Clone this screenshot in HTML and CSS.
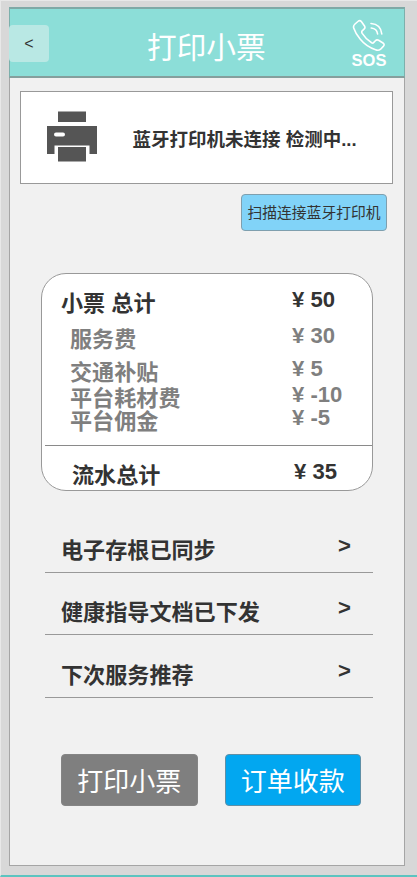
FILE: index.html
```html
<!DOCTYPE html>
<html lang="zh-CN">
<head>
<meta charset="utf-8">
<title>打印小票</title>
<link rel="stylesheet" href="styles.css">
</head>
<body>
<main class="screen">
  <header class="header">
    <button class="back">&lt;</button>
    <h1 class="title">打印小票</h1>
    <div class="sos">
      <svg class="phone" viewBox="0 0 34 34" fill="none" stroke="#fff" stroke-width="1.6" stroke-linecap="round" stroke-linejoin="round">
        <path d="M3 5 L6.5 2 Q8.2 1 9.500 2.700 L12.500 7 Q13.600 8.800 12 10.200 L10.200 11.800 Q9.300 12.800 10.200 14.400 Q14 20.400 19.600 23.800 Q20.900 24.500 21.800 23.400 L23.400 21.700 Q24.800 20.200 26.600 21.300 L31 24 Q32.900 25.300 31.500 27.100 L28.600 30.200 Q26.600 32 23.600 30.800 Q14.200 27.600 8.300 20.300 Q3.600 14.800 1.700 9 Q1 6.800 3 5Z"/>
        <path d="M19 4.500 Q28.800 5.200 29.800 15M19.200 9 Q25 9.500 25.600 15"/>
      </svg>
      <span class="sos-label">SOS</span>
    </div>
  </header>

  <section class="printer">
    <svg class="printer-icon" viewBox="0 0 50 51" fill="#555">
      <path d="M11 0.500h28V11H11zM0 15h50v28h-7.500v-8.500h-35V43H0zM11 36h28v14.500H11z"/>
      <rect x="7" y="21.500" width="11" height="4" rx="2" fill="#fff"/>
    </svg>
    <p class="printer-text">蓝牙打印机未连接 检测中...</p>
  </section>
  <button class="scan">扫描连接蓝牙打印机</button>

  <section class="receipt">
    <div class="row row-head"><span class="name">小票 总计</span><span class="price">¥ 50</span></div>
    <div class="row row-service"><span class="name">服务费</span><span class="price">¥ 30</span></div>
    <div class="row row-travel"><span class="name">交通补贴</span><span class="price">¥ 5</span></div>
    <div class="row row-supply"><span class="name">平台耗材费</span><span class="price">¥ -10</span></div>
    <div class="row row-fee"><span class="name">平台佣金</span><span class="price">¥ -5</span></div>
    <div class="row row-total"><span class="name">流水总计</span><span class="price">¥ 35</span></div>
  </section>

  <nav class="links">
    <a class="link"><span>电子存根已同步</span><span class="arrow">&gt;</span></a>
    <a class="link"><span>健康指导文档已下发</span><span class="arrow">&gt;</span></a>
    <a class="link"><span>下次服务推荐</span><span class="arrow">&gt;</span></a>
  </nav>

  <footer class="actions">
    <button class="action print">打印小票</button>
    <button class="action pay">订单收款</button>
  </footer>
</main>
</body>
</html>
```
FILE: styles.css
```css
* { box-sizing: border-box; }
body {
  margin: 0;
  height: 877px;
  padding: 6px 0 0 8px;
  overflow: hidden;
  background: #d8d8d8;
  border-left: 1px solid #e8e8e8;
  border-top: 1px solid #e8e8e8;
  border-bottom: 2px solid #5cc4c0;
  color: #333;
  font-family: "Liberation Sans", "Noto Sans CJK SC", sans-serif;
}
button {
  padding: 0;
  font-family: inherit;
  white-space: nowrap;
}
.screen {
  width: 396px;
  height: 859px;
  background: #f1f1f1;
  border: 1px solid #a5a5a5;
  border-top: 0;
}
.header {
  display: flex;
  height: 71px;
  margin: 0 -1px;
  background: #8cded8;
  border: 1px solid #7cb0ac;
  border-top: 2px solid #7fa9a6;
  border-bottom: 2px solid #859f9d;
}
.back {
  width: 40px;
  height: 37px;
  margin: 16px 0 0 -1px;
  border: 0;
  border-radius: 4px;
  background: #b9e8e4;
  color: #333;
  font-size: 16px;
}
.title {
  width: 120px;
  margin: 17px 0 0 98px;
  color: #fff;
  font-size: 29.7px;
  line-height: 44px;
  font-weight: 400;
  white-space: nowrap;
}
.sos {
  display: flex;
  flex-direction: column;
  align-items: center;
  width: 40px;
  margin: 10px 0 0 82px;
}
.phone { width: 34px; height: 34px; }
.sos-label {
  color: #fff;
  font-size: 16.5px;
  font-weight: 700;
  line-height: 14px;
}
.printer {
  display: flex;
  align-items: center;
  width: 373px;
  height: 93px;
  margin: 13px 0 0 10px;
  padding-left: 26px;
  background: #fff;
  border: 1px solid #999;
}
.printer-icon { width: 50px; height: 51px; margin-bottom: 3px; }
.printer-text {
  margin: 0 0 0 35.5px;
  font-size: 18.5px;
  font-weight: 700;
  white-space: nowrap;
}
.scan {
  display: block;
  width: 146px;
  height: 37px;
  margin: 10px 0 0 231px;
  border: 1px solid #7f9fae;
  border-radius: 4px;
  background: #81d3f8;
  color: #333;
  font-size: 14.8px;
  line-height: 34px;
}
.receipt {
  width: 332px;
  height: 218px;
  margin: 42px 0 0 31px;
  padding-top: 14px;
  overflow: hidden;
  background: #fff;
  border: 1px solid #999;
  border-radius: 25px;
  font-size: 22.1px;
  font-weight: 700;
}
.row {
  display: grid;
  grid-template-columns: 222px 1fr;
  align-items: center;
  padding-left: 28px;
  line-height: 19px;
  color: #7f7f7f;
  white-space: nowrap;
}
.price { margin-bottom: 8px; line-height: 11px; }
.row-head { height: 31px; padding-left: 19px; grid-template-columns: 231px 1fr; color: #333; }
.row-service { height: 41px; }
.row-travel { height: 25px; }
.row-supply { height: 27px; }
.row-fee { height: 19px; }
.row-total {
  height: 46px;
  margin: 14px 0 0 3px;
  padding: 13px 0 0 27px;
  border-top: 1px solid #8a8a8a;
  color: #333;
}
.links {
  width: 328px;
  margin: 19px 0 0 35px;
}
.link {
  display: flex;
  justify-content: space-between;
  align-items: flex-end;
  height: 62.5px;
  padding: 0 22px 8px 16px;
  border-bottom: 1px solid #999;
  font-size: 22.1px;
  font-weight: 700;
}
.arrow { margin-bottom: 5px; }
.actions {
  display: flex;
  gap: 27px;
  margin: 56px 0 0 51px;
}
.action {
  width: 136.5px;
  height: 52px;
  border: 1px solid #858585;
  border-radius: 4px;
  color: #fff;
  font-size: 26px;
}
.print { background: #7f7f7f; }
.pay { background: #02a7f0; border-color: #5f8fa6; }
```
